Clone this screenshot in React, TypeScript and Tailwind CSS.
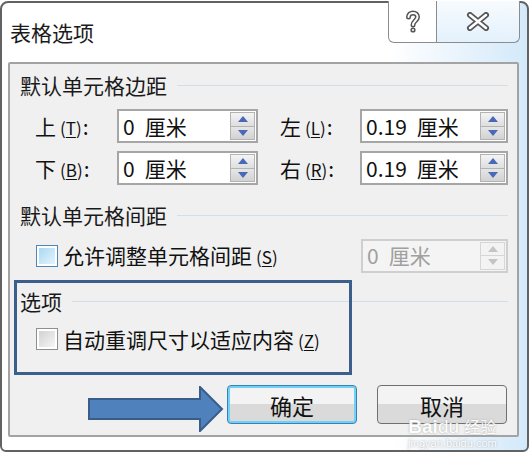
import React from 'react';

const FONT = "font-['Noto_Sans_CJK_SC','Noto_Sans',sans-serif]";

const Key = ({ k }: { k: string }) => (
  <span className="ml-[4px] mr-[1px] text-[17px]">
    (<span className="underline underline-offset-2">{k}</span>)
  </span>
);

const Tri = ({ up, disabled }: { up?: boolean; disabled?: boolean }) => (
  <svg width="10" height="6" viewBox="0 0 10 6">
    <path d={up ? 'M0 6 L5 0 L10 6 Z' : 'M0 0 L5 6 L10 0 Z'} fill={disabled ? '#c4c4c4' : '#4a68b8'} />
  </svg>
);

const Spinner = ({ disabled }: { disabled?: boolean }) => (
  <div className={`flex w-[25px] flex-col border ${disabled ? 'border-[#d6d6d6]' : 'border-[#b3b3b3]'}`}>
    <div className={`flex flex-1 items-center justify-center border-b ${disabled ? 'border-[#d6d6d6] bg-[#f3f3f3]' : 'border-[#b3b3b3] bg-linear-to-b from-[#f4f4f4] to-[#dedede]'}`}>
      <Tri up disabled={disabled} />
    </div>
    <div className={`flex flex-1 items-center justify-center ${disabled ? 'bg-[#f3f3f3]' : 'bg-linear-to-b from-[#e6e6e6] to-[#d2d2d2]'}`}>
      <Tri disabled={disabled} />
    </div>
  </div>
);

const SpinInput = ({ num, width, disabled }: { num: string; width: string; disabled?: boolean }) => (
  <div
    className={`flex h-[34px] items-stretch border-2 p-[1px] ${width} ${
      disabled ? 'border-[#cfcfcf] bg-[#f4f4f4] text-[#a0a0a0]' : 'border-[#a6a6a6] bg-white text-[#111]'
    }`}
  >
    <div className="flex flex-1 items-center gap-[10px] pl-[3px] text-[21px] leading-none">
      <span>{num}</span>
      <span>厘米</span>
    </div>
    <Spinner disabled={disabled} />
  </div>
);

const Heading = ({ text }: { text: string }) => (
  <div className="flex h-[24px] items-center pl-[10px] pr-[9px]">
    <span className="text-[21px] leading-none text-[#1a1a1a]">{text}</span>
    <div className="ml-[10px] h-px flex-1 bg-[#d3dee6]" />
  </div>
);

const CheckBox = ({ blue }: { blue?: boolean }) => (
  <div className={`flex h-[22px] w-[22px] items-center justify-center border ${blue ? 'border-[#4d86b8]' : 'border-[#8e8f8f]'} bg-white`}>
    <div
      className={`h-[16px] w-[16px] ${
        blue ? 'bg-linear-to-br from-[#a9d8f3] to-[#e4f4fd]' : 'bg-linear-to-br from-[#d2d2d2] to-[#f6f6f6]'
      }`}
    />
  </div>
);

const Btn = ({ text, focused }: { text: string; focused?: boolean }) => (
  <div
    className={`flex h-[39px] w-[130px] items-center justify-center rounded-[4px] border ${
      focused ? 'border-[#3c7fb1] shadow-[inset_0_0_0_2px_#6fd0f8]' : 'border-[#707070]'
    } bg-linear-to-b from-[#f3f3f3] from-50% to-[#dadada] to-50% text-[22px] leading-none text-[#111]`}
  >
    {text}
  </div>
);

export default function App() {
  return (
    <div className={`h-[454px] w-[532px] bg-white pt-[1px] ${FONT}`}>
      <div className="relative h-[451px] w-[529px] rounded-t-[8px] rounded-b-[6px] border-2 border-[#626262] bg-linear-to-r from-white from-[74%] to-[#d3e9fa]">
        {/* title bar */}
        <div className="flex h-[59px] items-center pl-[8px]">
          <span className="text-[21px] leading-none text-[#1b1b1b]">表格选项</span>
        </div>
        <div className="absolute right-[7px] top-[-2px] flex h-[42px]">
          <div className="flex w-[49px] items-center justify-center rounded-bl-[6px] border border-t-0 border-[#8c8c8c] bg-white">
            <svg width="16" height="24" viewBox="0 0 16 24">
              <path d="M3.5 7 C3.5 1.5 12.5 1.5 12.5 7 C12.5 10.5 8 11 8 15" fill="none" stroke="#555" strokeWidth="5" strokeLinecap="round" />
              <circle cx="8" cy="20" r="2.6" fill="#555" />
              <path d="M3.5 7 C3.5 1.5 12.5 1.5 12.5 7 C12.5 10.5 8 11 8 15" fill="none" stroke="#fff" strokeWidth="2" strokeLinecap="round" />
              <circle cx="8" cy="20" r="1.1" fill="#fff" />
            </svg>
          </div>
          <div className="flex w-[83px] items-center justify-center rounded-br-[6px] border border-l-0 border-t-0 border-[#8c8c8c] bg-linear-to-b from-[#f7fbfe] to-[#e3f1fc]">
            <svg width="24" height="19" viewBox="0 0 24 19">
              <path d="M4 3 L20 16 M20 3 L4 16" stroke="#555" strokeWidth="6" strokeLinecap="round" />
              <path d="M4 3 L20 16 M20 3 L4 16" stroke="#fff" strokeWidth="2.5" strokeLinecap="round" />
            </svg>
          </div>
        </div>

        {/* panel */}
        <div className="relative ml-[6px] h-[375px] w-[511px] rounded-[2px] border-2 border-[#a3a3a3] bg-[#f0f0f0] pt-[9px]">
          <Heading text="默认单元格边距" />

          <div className="mt-[12px] flex items-center pl-[25px] text-[21px] leading-none text-[#111]">
            <div className="w-[82px]">
              上<Key k="T" />:
            </div>
            <SpinInput num="0" width="w-[141px]" />
            <div className="ml-[22px] w-[80px]">
              左<Key k="L" />:
            </div>
            <SpinInput num="0.19" width="w-[148px]" />
          </div>

          <div className="mt-[8px] flex items-center pl-[25px] text-[21px] leading-none text-[#111]">
            <div className="w-[82px]">
              下<Key k="B" />:
            </div>
            <SpinInput num="0" width="w-[141px]" />
            <div className="ml-[22px] w-[80px]">
              右<Key k="R" />:
            </div>
            <SpinInput num="0.19" width="w-[148px]" />
          </div>

          <div className="mt-[18px]">
            <Heading text="默认单元格间距" />
          </div>

          <div className="mt-[11px] flex h-[35px] items-center pl-[26px] pr-[9px] text-[21px] leading-none text-[#111]">
            <CheckBox blue />
            <span className="ml-[5px]">
              允许调整单元格间距<Key k="S" />
            </span>
            <div className="ml-auto">
              <SpinInput num="0" width="w-[147px]" disabled />
            </div>
          </div>

          <div className="mt-[16px]">
            <Heading text="选项" />
          </div>

          <div className="mt-[13px] flex h-[26px] items-center pl-[26px] text-[21px] leading-none text-[#111]">
            <CheckBox />
            <span className="ml-[5px]">
              自动重调尺寸以适应内容<Key k="Z" />
            </span>
          </div>

          <div className="mt-[33px] flex justify-end gap-[20px] pr-[10px]">
            <Btn text="确定" focused />
            <Btn text="取消" />
          </div>

          {/* annotation rectangle */}
          <div className="absolute left-[4px] top-[216px] h-[95px] w-[338px] border-[3px] border-[#3b5e8c]" />

          {/* annotation arrow */}
          <svg className="absolute left-[78px] top-[322px]" width="136" height="46" viewBox="0 0 136 46">
            <path d="M1 13 L112 13 L112 1 L134 23 L112 45 L112 33 L1 33 Z" fill="#4f81bd" stroke="#385d8a" strokeWidth="2" />
          </svg>
        </div>

        {/* watermark */}
        <div className="absolute left-[406px] top-[414px] flex flex-col items-center leading-none text-white opacity-90 [text-shadow:0_0_2px_#9a9a9a]">
          <span className="font-['Liberation_Sans',sans-serif] text-[19px] font-bold">
            Bai<span className="font-normal">du</span> <span className={`${FONT} text-[16px] font-normal`}>经验</span>
          </span>
          <span className="mt-[2px] font-['Liberation_Sans',sans-serif] text-[11px]">jingyan.baidu.com</span>
        </div>
      </div>
    </div>
  );
}
